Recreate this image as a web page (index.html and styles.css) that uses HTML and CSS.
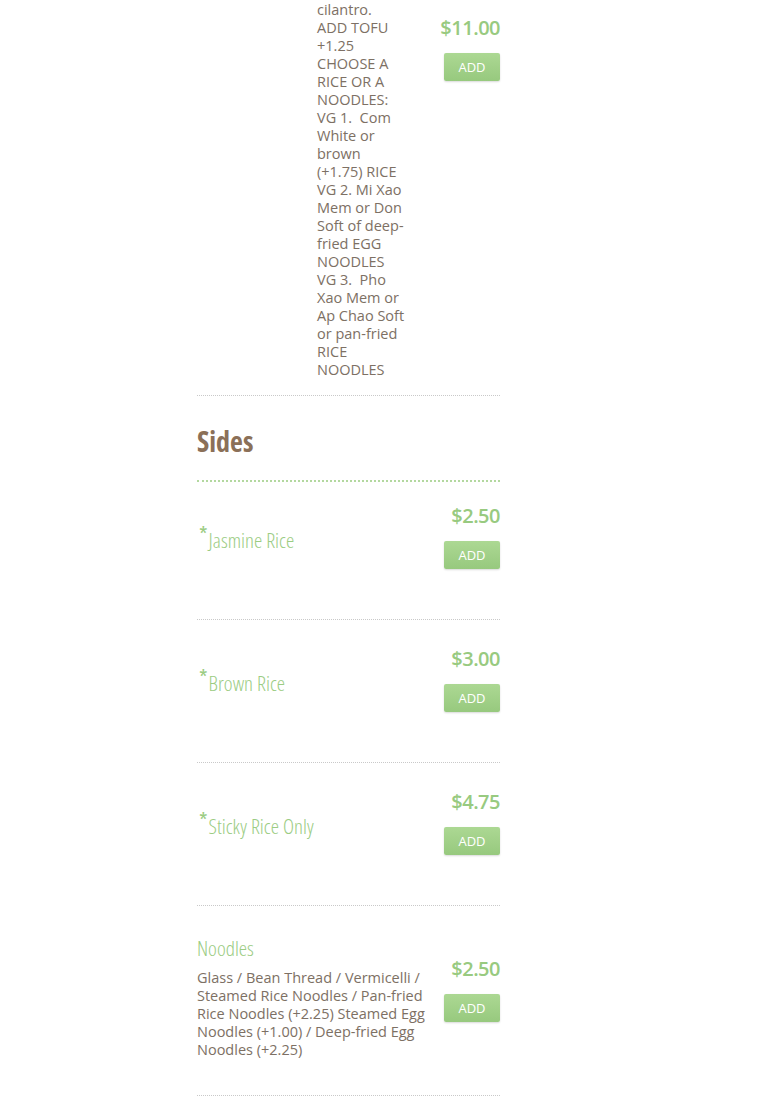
FILE: index.html
```html
<!DOCTYPE html>
<html lang="en">
<head>
<meta charset="utf-8">
<title>Menu</title>
<link rel="stylesheet" href="styles.css">
</head>
<body>
<div class="menu">
  <div class="item item--combo">
    <div class="item-name"></div>
    <div class="item-desc">mint, basil,<br>cilantro.<br>ADD TOFU +1.25<br>CHOOSE A RICE OR A NOODLES:<br>VG 1.&nbsp; Com White or brown (+1.75) RICE<br>VG 2. Mi Xao Mem or Don Soft of deep-fried EGG NOODLES<br>VG 3.&nbsp; Pho Xao Mem or Ap Chao Soft or pan-fried RICE NOODLES</div>
    <div class="price-block price-block--top">
      <div class="price">$11.00</div>
      <button class="btn">Add</button>
    </div>
  </div>

  <div class="section-head">
    <h2 class="section-title">Sides</h2>
  </div>

  <div class="row row--first">
    <div class="row-main">
      <div class="name"><span class="star">*</span>Jasmine Rice</div>
    </div>
    <div class="price-block">
      <div class="price">$2.50</div>
      <button class="btn">Add</button>
    </div>
  </div>

  <div class="row">
    <div class="row-main">
      <div class="name"><span class="star">*</span>Brown Rice</div>
    </div>
    <div class="price-block">
      <div class="price">$3.00</div>
      <button class="btn">Add</button>
    </div>
  </div>

  <div class="row">
    <div class="row-main">
      <div class="name"><span class="star">*</span>Sticky Rice Only</div>
    </div>
    <div class="price-block">
      <div class="price">$4.75</div>
      <button class="btn">Add</button>
    </div>
  </div>

  <div class="row row--described">
    <div class="row-main">
      <div class="name">Noodles</div>
      <p class="row-desc">Glass / Bean Thread / Vermicelli / Steamed Rice Noodles / Pan-fried Rice Noodles (+2.25) Steamed Egg Noodles (+1.00) / Deep-fried Egg Noodles (+2.25)</p>
    </div>
    <div class="price-block">
      <div class="price">$2.50</div>
      <button class="btn">Add</button>
    </div>
  </div>
</div>
</body>
</html>
```

FILE: styles.css
```css
html, body {
  margin: 0;
  padding: 0;
  background: #ffffff;
}

body {
  font-family: "Open Sans", "Noto Sans", sans-serif;
  color: #7d7064;
}

.menu {
  width: 303px;
  margin: -17px 0 0 197px;
}

.item--combo {
  display: grid;
  grid-template-columns: 120px 90px 1fr;
  align-items: start;
  padding-bottom: 16px;
  border-bottom: 1px dotted #c9c9c9;
}

.item-desc,
.row-desc {
  font-size: 14.5px;
  line-height: 18px;
  color: #7d7064;
  margin: 0;
}

.price-block {
  text-align: right;
  justify-self: end;
}

.price-block--top {
  margin-top: 32px;
}

.price {
  font-size: 20px;
  line-height: 26px;
  font-weight: 600;
  letter-spacing: -0.5px;
  color: #98ca80;
  white-space: nowrap;
}

.btn {
  display: block;
  width: 56px;
  height: 28px;
  margin: 12px 0 8px auto;
  padding: 0;
  border: none;
  border-radius: 2px;
  background: linear-gradient(#acd893, #97c97e);
  box-shadow: 0 1px 2px rgba(0, 0, 0, 0.15);
  color: #ffffff;
  font-family: "Open Sans", sans-serif;
  font-size: 13px;
  line-height: 28px;
  text-transform: uppercase;
}

.section-head {
  padding: 28px 0 22px;
  border-bottom: 2px dotted #b3d89f;
}

.section-title {
  margin: 0;
  font-family: "Open Sans", sans-serif;
  font-stretch: 75%;
  font-weight: 700;
  font-size: 28px;
  line-height: 34px;
  color: #8b7058;
}

.row {
  display: grid;
  grid-template-columns: 1fr 60px;
  column-gap: 11px;
  align-items: center;
  padding: 26px 0 42px;
  border-bottom: 1px dotted #c9c9c9;
}

.row--first {
  padding-top: 21px;
}

.row--described {
  padding-top: 30px;
  padding-bottom: 36px;
}

.row--described .price-block {
  align-self: start;
  margin-top: 20px;
}

.name {
  font-family: "Open Sans", sans-serif;
  font-stretch: 75%;
  font-weight: 350;
  font-size: 21px;
  line-height: 24px;
  color: #9bcc83;
}

.star {
  font-weight: 400;
  font-size: 22px;
  line-height: 0;
  vertical-align: 6px;
  margin: 0 1px 0 2px;
}

.row-desc {
  margin-top: 9px;
}
```
